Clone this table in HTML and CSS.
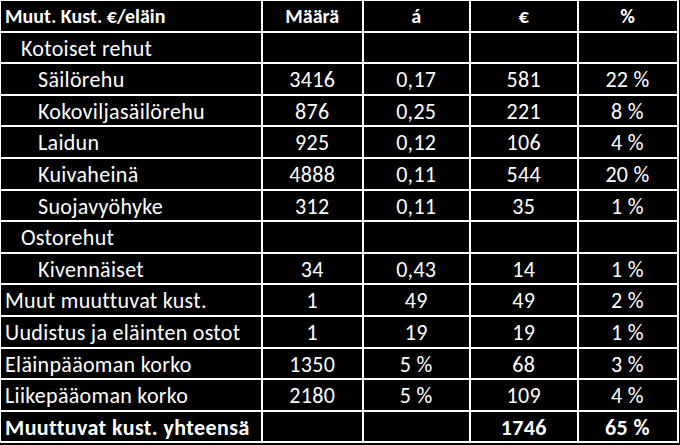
FILE: index.html
```html
<!DOCTYPE html>
<html lang="fi">
<head>
<meta charset="utf-8">
<title>Muuttuvat kustannukset</title>
<link rel="stylesheet" href="styles.css">
</head>
<body>
<div class="table">
  <div class="cell head name">Muut. Kust. €/eläin</div>
  <div class="cell head">Määrä</div>
  <div class="cell head">á</div>
  <div class="cell head">€</div>
  <div class="cell head">%</div>

  <div class="cell name l1">Kotoiset rehut</div>
  <div class="cell"></div><div class="cell"></div><div class="cell"></div><div class="cell"></div>

  <div class="cell name l2">Säilörehu</div>
  <div class="cell">3416</div><div class="cell">0,17</div><div class="cell">581</div><div class="cell">22 %</div>

  <div class="cell name l2">Kokoviljasäilörehu</div>
  <div class="cell">876</div><div class="cell">0,25</div><div class="cell">221</div><div class="cell">8 %</div>

  <div class="cell name l2">Laidun</div>
  <div class="cell">925</div><div class="cell">0,12</div><div class="cell">106</div><div class="cell">4 %</div>

  <div class="cell name l2">Kuivaheinä</div>
  <div class="cell">4888</div><div class="cell">0,11</div><div class="cell">544</div><div class="cell">20 %</div>

  <div class="cell name l2">Suojavyöhyke</div>
  <div class="cell">312</div><div class="cell">0,11</div><div class="cell">35</div><div class="cell">1 %</div>

  <div class="cell name l1">Ostorehut</div>
  <div class="cell"></div><div class="cell"></div><div class="cell"></div><div class="cell"></div>

  <div class="cell name l2">Kivennäiset</div>
  <div class="cell">34</div><div class="cell">0,43</div><div class="cell">14</div><div class="cell">1 %</div>

  <div class="cell name">Muut muuttuvat kust.</div>
  <div class="cell">1</div><div class="cell">49</div><div class="cell">49</div><div class="cell">2 %</div>

  <div class="cell name">Uudistus ja eläinten ostot</div>
  <div class="cell">1</div><div class="cell">19</div><div class="cell">19</div><div class="cell">1 %</div>

  <div class="cell name">Eläinpääoman korko</div>
  <div class="cell">1350</div><div class="cell">5 %</div><div class="cell">68</div><div class="cell">3 %</div>

  <div class="cell name">Liikepääoman korko</div>
  <div class="cell">2180</div><div class="cell">5 %</div><div class="cell">109</div><div class="cell">4 %</div>

  <div class="cell name total">Muuttuvat kust. yhteensä</div>
  <div class="cell total"></div><div class="cell total"></div><div class="cell total">1746</div><div class="cell total">65 %</div>
</div>
</body>
</html>
```

FILE: styles.css
```css
html, body {
  margin: 0;
  padding: 0;
  background: #000000;
}

.table {
  display: grid;
  width: 678.5px;
  box-sizing: border-box;
  grid-template-columns: 260px 98.5px 105.5px 105.5px 98px;
  grid-auto-rows: 29.6px;
  gap: 2px;
  padding: 1px 2px 1.5px 1px;
  background: #ffffff;
  font-family: "Carlito", Lato, "Open Sans", sans-serif;
  font-size: 22px;
  letter-spacing: 0.3px;
  color: #ffffff;
}

.cell {
  background: #000000;
  line-height: 27px;
  padding-top: 2px;
  text-align: center;
  white-space: nowrap;
  overflow: hidden;
}

.cell.head {
  font-weight: 700;
  font-size: 20px;
  letter-spacing: 0;
}

.cell.total {
  font-weight: 700;
  font-size: 22px;
  letter-spacing: 0.4px;
}

.cell.name {
  text-align: left;
  padding-left: 4px;
}

.cell.name.l1 {
  padding-left: 20px;
}

.cell.name.l2 {
  padding-left: 37px;
}
```
